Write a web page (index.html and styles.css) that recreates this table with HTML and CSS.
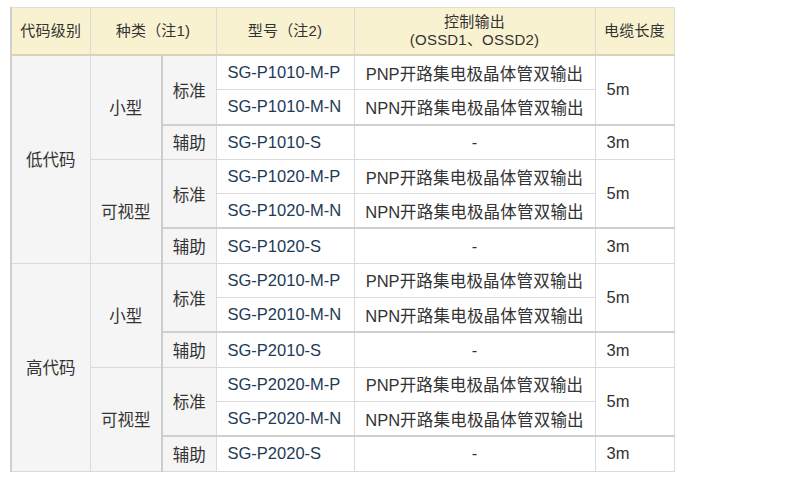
FILE: index.html
```html
<!DOCTYPE html>
<html lang="zh-CN">
<head>
<meta charset="utf-8">
<title>SG-P 型号一览</title>
<link rel="stylesheet" href="styles.css">
</head>
<body>
<table class="spec">
  <colgroup>
    <col class="c1"><col class="c2"><col class="c3"><col class="c4"><col class="c5"><col class="c6">
  </colgroup>
  <thead>
    <tr>
      <th>代码级别</th>
      <th colspan="2">种类（注1)</th>
      <th>型号（注2)</th>
      <th>控制输出<br>(OSSD1、OSSD2)</th>
      <th>电缆长度</th>
    </tr>
  </thead>
  <tbody>
    <tr>
      <td class="grp" rowspan="6">低代码</td>
      <td class="grp" rowspan="3">小型</td>
      <td class="kind" rowspan="2">标准</td>
      <td class="model">SG-P1010-M-P</td>
      <td class="out">PNP<span class="wide">开路集电极晶体管双输出</span></td>
      <td class="len" rowspan="2">5m</td>
    </tr>
    <tr>
      <td class="model">SG-P1010-M-N</td>
      <td class="out">NPN<span class="wide">开路集电极晶体管双输出</span></td>
    </tr>
    <tr class="aux">
      <td class="kind">辅助</td>
      <td class="model">SG-P1010-S</td>
      <td class="out">-</td>
      <td class="len">3m</td>
    </tr>
    <tr>
      <td class="grp" rowspan="3">可视型</td>
      <td class="kind" rowspan="2">标准</td>
      <td class="model">SG-P1020-M-P</td>
      <td class="out">PNP<span class="wide">开路集电极晶体管双输出</span></td>
      <td class="len" rowspan="2">5m</td>
    </tr>
    <tr>
      <td class="model">SG-P1020-M-N</td>
      <td class="out">NPN<span class="wide">开路集电极晶体管双输出</span></td>
    </tr>
    <tr class="aux">
      <td class="kind">辅助</td>
      <td class="model">SG-P1020-S</td>
      <td class="out">-</td>
      <td class="len">3m</td>
    </tr>
    <tr>
      <td class="grp" rowspan="6">高代码</td>
      <td class="grp" rowspan="3">小型</td>
      <td class="kind" rowspan="2">标准</td>
      <td class="model">SG-P2010-M-P</td>
      <td class="out">PNP<span class="wide">开路集电极晶体管双输出</span></td>
      <td class="len" rowspan="2">5m</td>
    </tr>
    <tr>
      <td class="model">SG-P2010-M-N</td>
      <td class="out">NPN<span class="wide">开路集电极晶体管双输出</span></td>
    </tr>
    <tr class="aux">
      <td class="kind">辅助</td>
      <td class="model">SG-P2010-S</td>
      <td class="out">-</td>
      <td class="len">3m</td>
    </tr>
    <tr>
      <td class="grp" rowspan="3">可视型</td>
      <td class="kind" rowspan="2">标准</td>
      <td class="model">SG-P2020-M-P</td>
      <td class="out">PNP<span class="wide">开路集电极晶体管双输出</span></td>
      <td class="len" rowspan="2">5m</td>
    </tr>
    <tr>
      <td class="model">SG-P2020-M-N</td>
      <td class="out">NPN<span class="wide">开路集电极晶体管双输出</span></td>
    </tr>
    <tr class="aux">
      <td class="kind">辅助</td>
      <td class="model">SG-P2020-S</td>
      <td class="out">-</td>
      <td class="len">3m</td>
    </tr>
  </tbody>
</table>
</body>
</html>
```
FILE: styles.css
```css
html, body {
  margin: 0;
  padding: 0;
  background: #ffffff;
}

body {
  padding: 7px 0 0 10px;
  font-family: "Liberation Sans", "Noto Sans CJK SC", sans-serif;
  color: #333333;
}

.spec {
  border-collapse: collapse;
  table-layout: fixed;
  width: 663px;
  border-left: 2px solid #cfcfcf;
}

.c1 { width: 79px; }
.c2 { width: 72px; }
.c3 { width: 54px; }
.c4 { width: 138px; }
.c5 { width: 241px; }
.c6 { width: 79px; }

.spec th,
.spec td {
  border: 1px solid #dadada;
  padding: 0;
  vertical-align: middle;
}

.spec th {
  background: #f9f2d0;
  font-weight: normal;
  font-size: 15px;
  line-height: 18px;
  letter-spacing: 0.2px;
  height: 46px;
  text-align: center;
  border-bottom: 2px solid #d9d3b8;
  border-top-color: #e4e0cc;
}

.spec td {
  height: 33.3px;
  font-size: 16.5px;
}

.grp,
.kind {
  background: #f5f5f5;
  text-align: center;
}

.kind {
  border-left: 2px solid #cdcdcd !important;
}

.model {
  color: #1d3a56;
  text-align: left;
  padding-left: 11px !important;
  background: #ffffff;
}

.out {
  text-align: center;
  background: #ffffff;
}

.wide {
  letter-spacing: 0.2px;
}

.len {
  text-align: left;
  padding-left: 11px !important;
  background: #ffffff;
}

.aux td {
  border-top: 2px solid #cfcfcf;
}
```
